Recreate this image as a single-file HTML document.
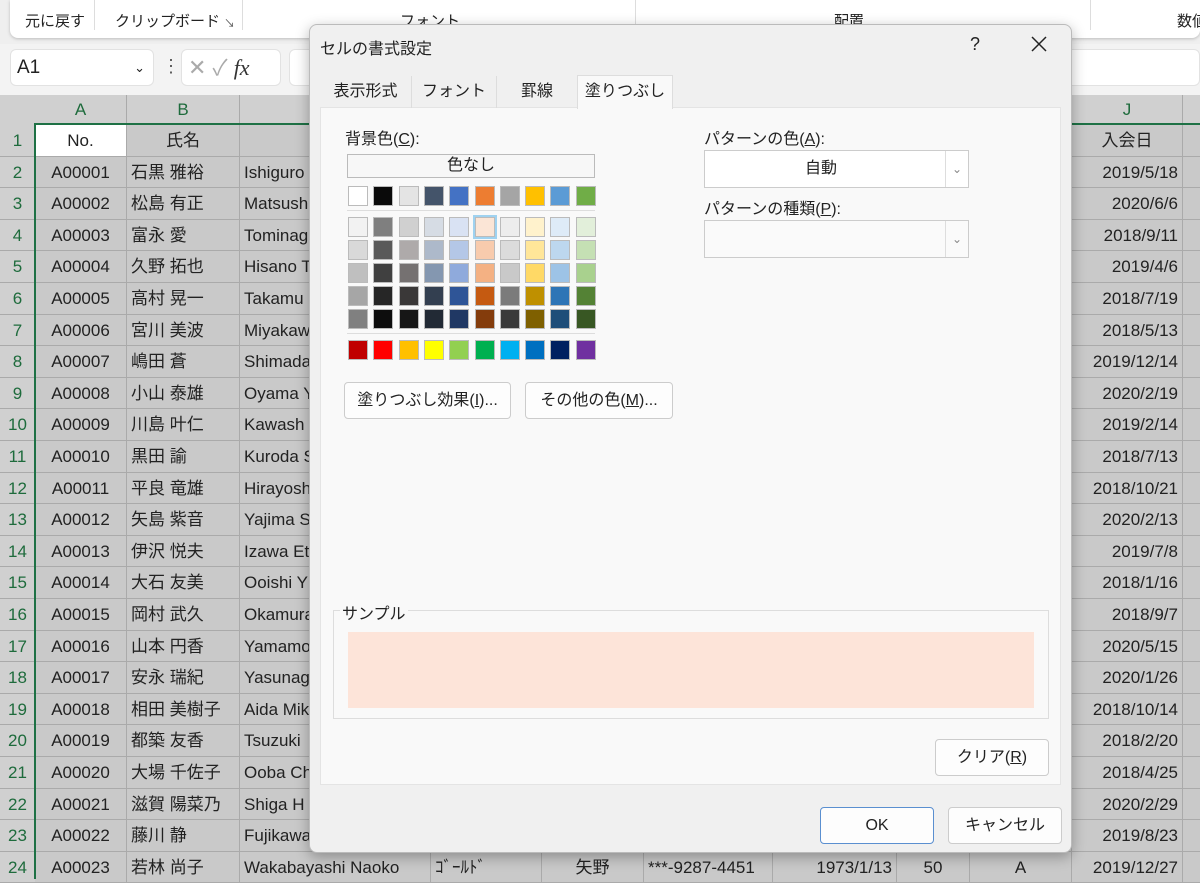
<!DOCTYPE html>
<html><head><meta charset="utf-8"><style>
*{margin:0;padding:0;box-sizing:border-box}
body{width:1200px;height:879px;overflow:hidden;background:#c9c9c9;font-family:"Liberation Sans","Noto Sans CJK JP",sans-serif;position:relative;color:#222}
.abs{position:absolute;white-space:nowrap}
.cell{position:absolute;font-size:17px;line-height:31px;white-space:nowrap;overflow:hidden;border-right:1px solid #aaa;border-bottom:1px solid #aaa;padding:0 4px;color:#222}
.rh{position:absolute;left:0;width:35px;font-size:17px;color:#1e6b3c;text-align:center;line-height:31px;background:#d0d0d0;border-bottom:1px solid #aaa}
.ch{position:absolute;top:95px;height:30px;font-size:17px;color:#1e6b3c;text-align:center;line-height:30px;background:#d0d0d0;border-right:1px solid #aaa}
.sw{position:absolute;width:20px;height:20px;border:1px solid #bbb}
.btn{position:absolute;background:#fdfdfd;border:1px solid #ccc;border-radius:4px;font-size:16px;text-align:center}
</style></head><body>
<!-- ribbon -->
<div class="abs" style="left:0;top:0;width:1200px;height:44px;background:#efefef"></div>
<div class="abs" style="left:10px;top:0;width:1190px;height:38px;background:#fff;border-radius:0 0 8px 8px;box-shadow:0 1px 3px #bbb"></div>
<div class="abs" style="left:25px;top:10px;font-size:15px">元に戻す</div>
<div class="abs" style="left:94px;top:0;width:1px;height:30px;background:#ddd"></div>
<div class="abs" style="left:115px;top:10px;font-size:15px">クリップボード</div>
<div class="abs" style="left:224px;top:15px;font-size:11px;color:#555">↘</div>
<div class="abs" style="left:242px;top:0;width:1px;height:30px;background:#ddd"></div>
<div class="abs" style="left:400px;top:10px;font-size:15px">フォント</div>
<div class="abs" style="left:635px;top:0;width:1px;height:30px;background:#ddd"></div>
<div class="abs" style="left:834px;top:10px;font-size:15px">配置</div>
<div class="abs" style="left:1090px;top:0;width:1px;height:30px;background:#ddd"></div>
<div class="abs" style="left:1177px;top:10px;font-size:15px">数値</div>
<!-- formula bar -->
<div class="abs" style="left:0;top:44px;width:1200px;height:51px;background:#f3f3f3"></div>
<div class="abs" style="left:10px;top:49px;width:144px;height:37px;background:#fff;border:1px solid #e2e2e2;border-radius:6px;font-size:19px;line-height:35px;padding-left:6px">A1<span style="position:absolute;right:8px;font-size:13px">&#8964;</span></div>
<div class="abs" style="left:162px;top:56px;font-size:18px;color:#555">⋮</div>
<div class="abs" style="left:181px;top:49px;width:100px;height:37px;background:#fff;border:1px solid #e2e2e2;border-radius:6px;font-size:22px;line-height:35px;color:#aaa;padding-left:6px">✕ ✓ <i style="color:#333;font-family:'Liberation Serif',serif">fx</i></div>
<div class="abs" style="left:289px;top:49px;width:911px;height:37px;background:#fff;border:1px solid #e2e2e2;border-radius:6px"></div>
<!-- sheet -->
<div class="abs" style="left:0;top:95px;width:35px;height:30px;background:#d0d0d0"></div>
<div id="sheet"></div>
<div class="abs" style="left:34px;top:123px;width:1166px;height:2px;background:#1e7145"></div>
<div class="abs" style="left:34px;top:123px;width:2px;height:756px;background:#1e7145"></div>
<!-- dialog -->
<div class="abs" style="left:309px;top:24px;width:763px;height:829px;background:#f0f0f0;border:1px solid #bbb;border-radius:8px;box-shadow:0 4px 14px rgba(0,0,0,.3)">
 <div class="abs" style="left:10px;top:10px;font-size:16px">セルの書式設定</div>
 <div class="abs" style="left:660px;top:9px;font-size:18px">?</div>
 <svg class="abs" style="left:721px;top:11px" width="16" height="16"><path d="M1 1L15 15M15 1L1 15" stroke="#222" stroke-width="1.5"/></svg>
 <div class="abs" style="left:10px;top:82px;width:741px;height:678px;background:#f9f9f9;border:1px solid #e4e4e4"></div>
 <div class="abs" style="left:10px;top:51px;width:92px;height:32px;border-right:1px solid #ddd;font-size:16px;line-height:32px;text-align:center">表示形式</div>
 <div class="abs" style="left:102px;top:51px;width:85px;height:32px;border-right:1px solid #ddd;font-size:16px;line-height:32px;text-align:center">フォント</div>
 <div class="abs" style="left:187px;top:51px;width:80px;height:32px;font-size:16px;line-height:32px;text-align:center">罫線</div>
 <div class="abs" style="left:267px;top:50px;width:96px;height:34px;background:#f9f9f9;border:1px solid #ddd;border-bottom:none;font-size:16px;line-height:32px;text-align:center">塗りつぶし</div>
 <div class="abs" style="left:35px;top:100px;font-size:16px">背景色(<u>C</u>):</div>
 <div class="abs" style="left:37px;top:129px;width:248px;height:24px;background:#f7f7f7;border:1px solid #bbb;font-size:16px;text-align:center;line-height:22px">色なし</div>
 <div class="abs" style="left:37px;top:185px;width:248px;height:1px;background:#ddd"></div>
 <div class="abs" style="left:37px;top:308px;width:248px;height:1px;background:#ddd"></div>
 <div id="pal"></div>
 <div class="abs" style="left:394px;top:100px;font-size:16px">パターンの色(<u>A</u>):</div>
 <div class="abs" style="left:394px;top:125px;width:265px;height:38px;background:#fff;border:1px solid #ccc;font-size:16px;line-height:36px;padding-left:100px">自動<span style="position:absolute;right:0;top:0;width:23px;height:36px;border-left:1px solid #ddd;text-align:center;color:#888;font-size:12px">&#8964;</span></div>
 <div class="abs" style="left:394px;top:170px;font-size:16px">パターンの種類(<u>P</u>):</div>
 <div class="abs" style="left:394px;top:195px;width:265px;height:38px;background:#fafafa;border:1px solid #ccc"><span style="position:absolute;right:0;top:0;width:23px;height:36px;border-left:1px solid #ddd;text-align:center;color:#888;font-size:12px;line-height:36px">&#8964;</span></div>
 <div class="btn" style="left:34px;top:357px;width:167px;height:37px;line-height:35px">塗りつぶし効果(<u>I</u>)...</div>
 <div class="btn" style="left:215px;top:357px;width:148px;height:37px;line-height:35px">その他の色(<u>M</u>)...</div>
 <div class="abs" style="left:23px;top:585px;width:716px;height:109px;border:1px solid #ddd"></div>
 <div class="abs" style="left:30px;top:575px;font-size:16px;background:#f9f9f9;padding:0 2px">サンプル</div>
 <div class="abs" style="left:38px;top:607px;width:686px;height:76px;background:#fde4d9"></div>
 <div class="btn" style="left:625px;top:714px;width:114px;height:37px;line-height:35px">クリア(<u>R</u>)</div>
 <div class="btn" style="left:510px;top:782px;width:114px;height:37px;line-height:35px;border:1px solid #5a8fd0">OK</div>
 <div class="btn" style="left:638px;top:782px;width:114px;height:37px;line-height:35px">キャンセル</div>
</div>
<script>
var cols=[[35,127,'A'],[127,240,'B'],[240,431,'C'],[431,542,'D'],[542,644,'E'],[644,773,'F'],[773,897,'G'],[897,970,'H'],[970,1072,'I'],[1072,1183,'J'],[1183,1260,'K']];
var names=['石黒 雅裕','松島 有正','富永 愛','久野 拓也','高村 晃一','宮川 美波','嶋田 蒼','小山 泰雄','川島 叶仁','黒田 諭','平良 竜雄','矢島 紫音','伊沢 悦夫','大石 友美','岡村 武久','山本 円香','安永 瑞紀','相田 美樹子','都築 友香','大場 千佐子','滋賀 陽菜乃','藤川 静','若林 尚子'];
var rom=['Ishiguro','Matsush','Tominag','Hisano T','Takamu','Miyakaw','Shimada','Oyama Y','Kawash','Kuroda S','Hirayosh','Yajima S','Izawa Et','Ooishi Y','Okamura','Yamamo','Yasunag','Aida Mik','Tsuzuki','Ooba Ch','Shiga H','Fujikawa','Wakabayashi Naoko'];
var dates=['2019/5/18','2020/6/6','2018/9/11','2019/4/6','2018/7/19','2018/5/13','2019/12/14','2020/2/19','2019/2/14','2018/7/13','2018/10/21','2020/2/13','2019/7/8','2018/1/16','2018/9/7','2020/5/15','2020/1/26','2018/10/14','2018/2/20','2018/4/25','2020/2/29','2019/8/23','2019/12/27'];
var h='';
cols.forEach(c=>{h+='<div class="ch" style="left:'+c[0]+'px;width:'+(c[1]-c[0])+'px">'+c[2]+'</div>';});
for(var r=0;r<24;r++){var t=125+r*31.6;
h+='<div class="rh" style="top:'+t+'px;height:31.6px">'+(r+1)+'</div>';
cols.forEach((c,i)=>{var txt='',al='left',bg='';
 if(r==0){txt=['No.','氏名','','','','','','','','入会日',''][i];al='center';if(i==0)bg='background:#fff;';}
 else{var k=r-1;
  if(i==0){txt='A'+String(r).padStart(5,'0');al='center';}
  if(i==1)txt=names[k]; if(i==2)txt=rom[k]; if(i==9){txt=dates[k];al='right';}
  if(r==23){if(i==3)txt='ｺﾞｰﾙﾄﾞ';if(i==4){txt='矢野';al='center'}if(i==5)txt='***-9287-4451';if(i==6){txt='1973/1/13';al='right'}if(i==7){txt='50';al='center'}if(i==8){txt='A';al='center'}}}
 h+='<div class="cell" style="'+bg+'left:'+c[0]+'px;top:'+t+'px;width:'+(c[1]-c[0])+'px;height:31.6px;text-align:'+al+'">'+txt+'</div>';});}
document.getElementById('sheet').innerHTML=h;
var P=[['#fff','#0a0a0a','#e4e4e4','#44546a','#4472c4','#ed7d31','#a5a5a5','#ffc000','#5b9bd5','#70ad47'],
['#f2f2f2','#7f7f7f','#d0d0d0','#d6dce4','#d9e2f3','#fbe5d6','#ededed','#fff2cc','#deebf7','#e2efda'],
['#d9d9d9','#595959','#aeaaaa','#adb9ca','#b4c7e7','#f8cbad','#dbdbdb','#ffe699','#bdd7ee','#c5e0b4'],
['#bfbfbf','#404040','#757171','#8497b0','#8faadc','#f4b183','#c9c9c9','#ffd966','#9dc3e6','#a9d18e'],
['#a6a6a6','#262626','#3a3838','#333f50','#2f5597','#c55a11','#7b7b7b','#bf9000','#2e75b6','#548235'],
['#808080','#0d0d0d','#161616','#222a35','#203864','#843c0c','#3a3a3a','#7f6000','#1f4e79','#385723'],
['#c00000','#ff0000','#ffc000','#ffff00','#92d050','#00b050','#00b0f0','#0070c0','#002060','#7030a0']];
var ys=[161,192,215,238,261,284,315],p='';
P.forEach((row,ri)=>row.forEach((c,ci)=>{p+='<div class="sw" style="left:'+(38+ci*25.3)+'px;top:'+ys[ri]+'px;background:'+c+(ri==1&&ci==5?';outline:2px solid #9fd2f0':'')+'"></div>';}));
document.getElementById('pal').innerHTML=p;
</script>
</body></html>
